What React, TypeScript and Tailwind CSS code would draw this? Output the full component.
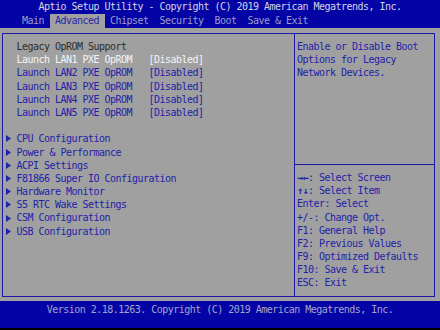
const mono = { fontFamily: '"DejaVu Sans Mono", "Liberation Mono", monospace' }

const lanRows = [1, 2, 3, 4, 5]

const submenus = [
  'CPU Configuration',
  'Power & Performance',
  'ACPI Settings',
  'F81866 Super IO Configuration',
  'Hardware Monitor',
  'S5 RTC Wake Settings',
  'CSM Configuration',
  'USB Configuration',
]

const helpLines = ['Enable or Disable Boot', 'Options for Legacy', 'Network Devices.']

const keys: [string, string][] = [
  ['→←', ': Select Screen'],
  ['↑↓', ': Select Item'],
  ['', 'Enter: Select'],
  ['', '+/-: Change Opt.'],
  ['', 'F1: General Help'],
  ['', 'F2: Previous Values'],
  ['', 'F9: Optimized Defaults'],
  ['', 'F10: Save & Exit'],
  ['', 'ESC: Exit'],
]

function Row({ text, className }: { text: string; className: string }) {
  return <div className={`h-[13.2px] leading-[13.2px] whitespace-pre ${className}`}>{text}</div>
}

export default function App() {
  return (
    <div
      style={mono}
      className="w-[440px] h-[330px] overflow-hidden bg-[#a0a0a0] flex flex-col text-[10px] tracking-[-0.52px]"
    >
      <header className="h-[28px] bg-[#0404a6] flex flex-col">
        <div className="h-[14px] leading-[14px] text-center text-[#d4d4e4] whitespace-pre">
          Aptio Setup Utility - Copyright (C) 2019 American Megatrends, Inc.
        </div>
        <div className="h-[14px] leading-[14px] whitespace-pre text-[#9c9cc8]">
          {'    Main '}
          <span className="inline-block h-[14px] bg-[#a0a0a0] text-[#2626a8]">{' Advanced '}</span>
          {' Chipset  Security  Boot  Save & Exit'}
        </div>
      </header>

      <div className="mt-[5px] ml-[2px] w-[433px] h-[264px] border border-[#1a1aa4] flex">
        <div className="w-[291px] pt-[6px] pl-[2.5px] flex flex-col">
          <Row text="  Legacy OpROM Support" className="text-[#2c2c2c]" />
          {lanRows.map((n) => (
            <Row
              key={n}
              text={`  Launch LAN${n} PXE OpROM   [Disabled]`}
              className={n === 1 ? 'text-[#f4f4f4]' : 'text-[#2222aa]'}
            />
          ))}
          <div className="h-[13.2px]" />
          {submenus.map((s) => (
            <div key={s} className="h-[13.2px] leading-[13.2px] whitespace-pre text-[#2222aa] flex items-center">
              <span className="w-[11px] flex items-center">
                <svg width="5" height="7" viewBox="0 0 5 7">
                  <path d="M0 0 L5 3.5 L0 7 Z" fill="#2222aa" />
                </svg>
              </span>
              {s}
            </div>
          ))}
        </div>

        <div className="flex-1 border-l border-[#1a1aa4] pt-[6px] flex flex-col text-[#2222aa]">
          <div className="pl-[2px]">
            {helpLines.map((l) => (
              <Row key={l} text={l} className="" />
            ))}
          </div>
          <div className="mt-[84.4px] border-t border-[#1a1aa4]" />
          <div className="mt-[6px] pl-[2px]">
            {keys.map(([a, k]) => (
              <div key={k} className="h-[13.2px] leading-[13.2px] whitespace-pre">
                {a && <span className="font-bold">{a}</span>}
                {k}
              </div>
            ))}
          </div>
        </div>
      </div>

      <footer className="mt-[4px] h-[27px] bg-[#0404a6] pt-[2px]">
        <div className="h-[14px] leading-[14px] text-center text-[#a4a4cc] whitespace-pre">
          Version 2.18.1263. Copyright (C) 2019 American Megatrends, Inc.
        </div>
      </footer>
      <div className="flex-1 bg-black" />
    </div>
  )
}
